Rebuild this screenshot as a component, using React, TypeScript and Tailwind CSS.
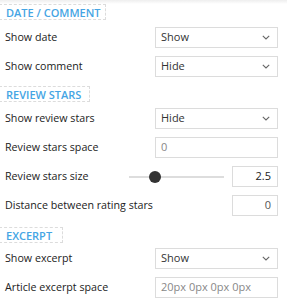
import React from "react";

const font = { fontFamily: '"Open Sans", "Liberation Sans", sans-serif' };

function Header({ label, w }: { label: string; w: string }) {
  return (
    <div className={`h-[16px] ${w} border border-dashed border-[#dcdcdc] -ml-px flex items-center pl-[6px] whitespace-nowrap`}>
      <span className="text-[11px] font-semibold text-[#45a5e4] leading-none">{label}</span>
    </div>
  );
}

function Select({ value }: { value: string }) {
  return (
    <div className="w-[123px] h-[21px] border border-[#dcdcdc] bg-white flex items-center justify-between pl-[5px] pr-[7px]">
      <span className="text-[11px] text-[#333]">{value}</span>
      <svg width="8" height="5" viewBox="0 0 8 5" fill="none">
        <path d="M0.8 0.8 L4 4 L7.2 0.8" stroke="#666" strokeWidth="1.1" />
      </svg>
    </div>
  );
}

function Row({ label, children }: { label: string; children: React.ReactNode }) {
  return (
    <div className="h-[29px] flex items-center justify-between pl-[5px] pr-[9px]">
      <span className="text-[10.7px] text-[#222] whitespace-nowrap">{label}</span>
      {children}
    </div>
  );
}

export default function App() {
  return (
    <div className="w-[287px] h-[306px] bg-white relative overflow-hidden" style={font}>
      <div className="absolute top-0 left-0 right-0 h-[4px] bg-gradient-to-b from-[#eeeeee] to-white" />
      <div className="pt-[4px]">
        <Header label="DATE / COMMENT" w="w-[107px]" />
        <div className="mt-[3px]">
          <Row label="Show date"><Select value="Show" /></Row>
          <Row label="Show comment"><Select value="Hide" /></Row>
        </div>
        <div className="mt-[5px]">
          <Header label="REVIEW STARS" w="w-[91px]" />
        </div>
        <div className="mt-[2px]">
          <Row label="Show review stars"><Select value="Hide" /></Row>
          <Row label="Review stars space">
            <div className="w-[123px] h-[21px] border border-[#dcdcdc] flex items-center pl-[5px]">
              <span className="text-[11px] text-[#888]">0</span>
            </div>
          </Row>
          <Row label="Review stars size">
            <div className="flex items-center">
              <div className="relative w-[95px] h-[2px] bg-[#dddddd] mr-[8px]">
                <div className="absolute left-[20px] top-[-5px] w-[12px] h-[12px] rounded-full bg-[#333]" />
              </div>
              <div className="w-[46px] h-[21px] border border-[#dcdcdc] flex items-center justify-end pr-[6px]">
                <span className="text-[11px] text-[#222]">2.5</span>
              </div>
            </div>
          </Row>
          <Row label="Distance between rating stars">
            <div className="w-[46px] h-[21px] border border-[#dcdcdc] flex items-center justify-end pr-[6px]">
              <span className="text-[11px] text-[#555]">0</span>
            </div>
          </Row>
        </div>
        <div className="mt-[7px]">
          <Header label="EXCERPT" w="w-[64px]" />
        </div>
        <div className="mt-[1px]">
          <Row label="Show excerpt"><Select value="Show" /></Row>
          <Row label="Article excerpt space">
            <div className="w-[123px] h-[21px] border border-[#dcdcdc] flex items-center pl-[5px]">
              <span className="text-[11px] text-[#888]">20px 0px 0px 0px</span>
            </div>
          </Row>
        </div>
      </div>
    </div>
  );
}
